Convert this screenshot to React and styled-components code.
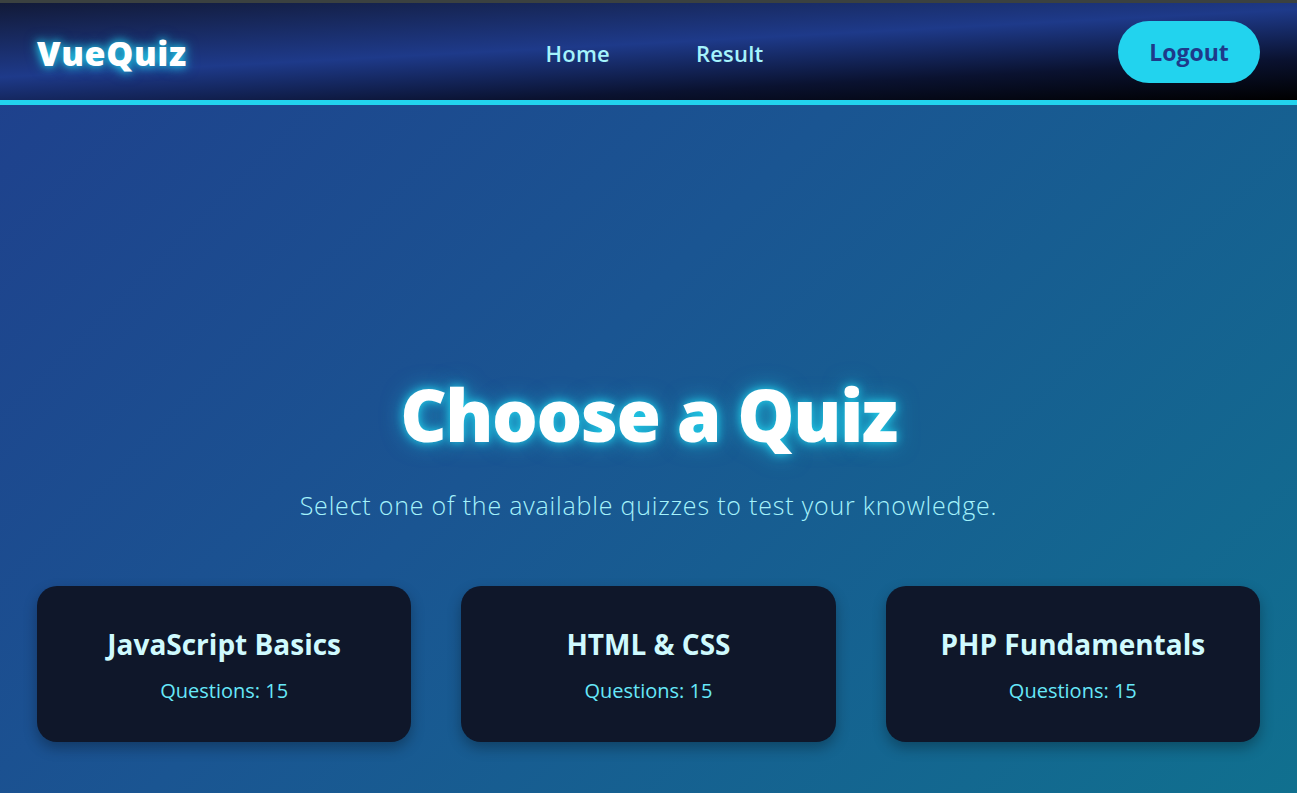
import React from 'react';
import styled, { createGlobalStyle } from 'styled-components';

const GlobalStyle = createGlobalStyle`
  html, body {
    margin: 0;
    padding: 0;
  }
  body {
    font-family: "Segoe UI", "Open Sans", "Noto Sans", sans-serif;
    background: #1e4590;
    border-top: 3px solid #3b4140;
  }
  * {
    box-sizing: border-box;
  }
`;

const Page = styled.div`
  min-height: 790px;
  display: flex;
  flex-direction: column;
  background: linear-gradient(135deg, #1f3f8c 0%, #1a5592 45%, #10708f 100%);
`;

const Navbar = styled.header`
  height: 102px;
  display: grid;
  grid-template-columns: 1fr auto 1fr;
  align-items: center;
  padding: 0 37px;
  background: linear-gradient(177deg, #121a38 0%, #1e3a8a 45%, #0a1230 75%, #000 100%);
  border-bottom: 5px solid #22d3ee;
`;

const Logo = styled.div`
  font-size: 34px;
  font-weight: 800;
  color: #fff;
  letter-spacing: 0.6px;
  padding-top: 3px;
  text-shadow: 0 0 8px #22d3ee, 0 0 14px rgba(34, 211, 238, 0.6);
`;

const NavLinks = styled.nav`
  display: flex;
  gap: 86px;
  padding-top: 2px;
  margin-left: 12px;
`;

const NavLink = styled.a`
  font-size: 22px;
  font-weight: 600;
  letter-spacing: 0.2px;
  color: #a5f3fc;
  text-decoration: none;
  cursor: pointer;
`;

const LogoutButton = styled.button`
  justify-self: end;
  width: 142px;
  height: 62px;
  border: none;
  border-radius: 31px;
  background: #22d3ee;
  color: #1e3a8a;
  font-family: inherit;
  font-size: 23px;
  font-weight: 700;
  cursor: pointer;
`;

const Main = styled.main`
  flex: 1;
  display: flex;
  flex-direction: column;
  align-items: center;
  padding: 273px 37px 50px;
`;

const Title = styled.h1`
  margin: 0;
  font-size: 72px;
  font-weight: 800;
  letter-spacing: -1.5px;
  line-height: 1;
  color: #fff;
  text-shadow: 0 0 10px #22d3ee, 0 0 22px rgba(34, 211, 238, 0.6);
`;

const Subtitle = styled.p`
  margin: 38px 0 0;
  font-size: 25px;
  font-weight: 300;
  letter-spacing: 0.8px;
  color: #a5f3fc;
`;

const CardGrid = styled.div`
  width: 100%;
  display: grid;
  grid-template-columns: repeat(3, 1fr);
  gap: 50px;
  margin-top: 64px;
`;

const Card = styled.div`
  height: 156px;
  border-radius: 20px;
  background: #0f172a;
  display: flex;
  flex-direction: column;
  align-items: center;
  justify-content: center;
  gap: 14px;
  box-shadow: 0 6px 14px rgba(0, 0, 0, 0.3);
  cursor: pointer;
`;

const CardTitle = styled.h2`
  margin: 0;
  font-size: 28px;
  font-weight: 700;
  color: #cffafe;
`;

const CardMeta = styled.div`
  font-size: 20px;
  color: #67e8f9;
`;

const quizzes = [
  { title: 'JavaScript Basics', count: 15 },
  { title: 'HTML & CSS', count: 15 },
  { title: 'PHP Fundamentals', count: 15 },
];

export default function App() {
  return (
    <>
      <GlobalStyle />
      <Page>
        <Navbar>
          <Logo>VueQuiz</Logo>
          <NavLinks>
            <NavLink>Home</NavLink>
            <NavLink>Result</NavLink>
          </NavLinks>
          <LogoutButton>Logout</LogoutButton>
        </Navbar>
        <Main>
          <Title>Choose a Quiz</Title>
          <Subtitle>Select one of the available quizzes to test your knowledge.</Subtitle>
          <CardGrid>
            {quizzes.map((q) => (
              <Card key={q.title}>
                <CardTitle>{q.title}</CardTitle>
                <CardMeta>Questions: {q.count}</CardMeta>
              </Card>
            ))}
          </CardGrid>
        </Main>
      </Page>
    </>
  );
}
